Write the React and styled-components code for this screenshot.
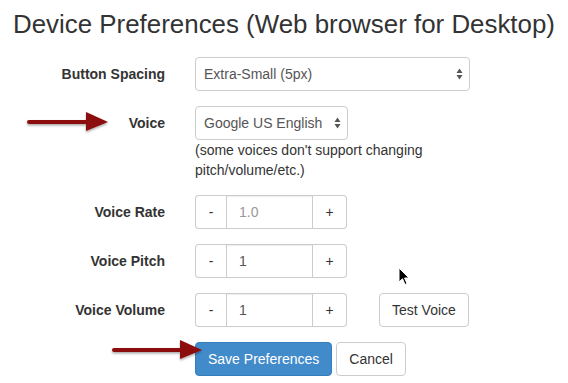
import React from "react";
import styled, { createGlobalStyle } from "styled-components";

const Global = createGlobalStyle`
  html, body { margin: 0; padding: 0; background: #fff; }
  body {
    font-family: "Liberation Sans", Arial, Helvetica, sans-serif;
    font-size: 14px;
    line-height: 20px;
    color: #333;
  }
  * { box-sizing: border-box; }
`;

const Page = styled.div`
  position: relative;
  width: 568px;
  height: 383px;
  padding: 10px 0 0 15px;
  overflow: hidden;
`;

const Title = styled.h1`
  margin: 0 0 18.4px -2px;
  font-size: 25.9px;
  font-weight: 400;
  line-height: 28.6px;
  color: #333;
  white-space: nowrap;
`;

const Form = styled.div`
  display: grid;
  grid-template-columns: 150px auto;
  column-gap: 30px;
  row-gap: 15px;
  align-items: start;
`;

const Label = styled.div`
  text-align: right;
  font-weight: 700;
  padding-top: 7px;
  line-height: 20px;
  color: #333;
`;

const Control = styled.div`
  display: flex;
  flex-direction: column;
  align-items: flex-start;
`;

const InlineRow = styled.div`
  display: flex;
  align-items: center;
  gap: ${(p) => p.$gap || 0}px;
`;

const SelectBox = styled.div`
  width: ${(p) => p.$w}px;
  height: 34px;
  border: 1px solid #ccc;
  border-radius: 4px;
  background: #fff;
  display: flex;
  align-items: center;
  justify-content: space-between;
  padding: 0 6px 0 8px;
  color: #555;
`;

const Help = styled.div`
  color: #333;
  line-height: 20px;
  width: 260px;
`;

const Group = styled.div`
  display: flex;
  height: 34px;
`;

const GroupBtn = styled.div`
  width: ${(p) => p.$w}px;
  height: 34px;
  border: 1px solid #ccc;
  background: #fff;
  display: flex;
  align-items: center;
  justify-content: center;
  color: #333;
  border-radius: ${(p) => (p.$side === "left" ? "4px 0 0 4px" : "0 4px 4px 0")};
  ${(p) => (p.$side === "left" ? "border-right: none;" : "border-left: none;")}
`;

const GroupInput = styled.div`
  width: 87px;
  height: 34px;
  border: 1px solid #ccc;
  padding: 0 12px;
  display: flex;
  align-items: center;
  color: ${(p) => (p.$placeholder ? "#999" : "#555")};
  box-shadow: inset 0 1px 1px rgba(0, 0, 0, 0.075);
`;

const Button = styled.div`
  height: 34px;
  padding: 0 12px;
  border: 1px solid ${(p) => (p.$primary ? "#357ebd" : "#ccc")};
  border-radius: 4px;
  background: ${(p) => (p.$primary ? "#428bca" : "#fff")};
  color: ${(p) => (p.$primary ? "#fff" : "#333")};
  display: flex;
  align-items: center;
  white-space: nowrap;
`;

const Overlay = styled.svg`
  position: absolute;
  left: ${(p) => p.$x}px;
  top: ${(p) => p.$y}px;
  overflow: visible;
`;

const Caret = () => (
  <svg width="7" height="12" viewBox="0 0 7 12">
    <path d="M3.5 0.5 L6.5 5 L0.5 5 Z" fill="#555" />
    <path d="M3.5 11.5 L6.5 7 L0.5 7 Z" fill="#555" />
  </svg>
);

const Arrow = ({ x, y, len }) => (
  <Overlay $x={x} $y={y} width={len} height="22" viewBox={`0 0 ${len} 22`}>
    <defs>
      <filter id={`sh${x}`} x="-10%" y="-30%" width="120%" height="180%">
        <feDropShadow dx="0" dy="1.5" stdDeviation="1.2" floodColor="#000" floodOpacity="0.35" />
      </filter>
    </defs>
    <g filter={`url(#sh${x})`}>
      <rect x="0" y="9" width={len - 20} height="4" rx="2" fill="#8c0b0b" />
      <path d={`M${len - 22} 1 L${len} 11 L${len - 22} 20 Z`} fill="#8c0b0b" />
    </g>
  </Overlay>
);

const Cursor = () => (
  <Overlay $x={398} $y={267} width="12" height="19" viewBox="0 0 12 19">
    <path
      d="M1 1 L1 15 L4.5 11.8 L7 17.5 L9 16.6 L6.6 11 L11 11 Z"
      fill="#000"
      stroke="#fff"
      strokeWidth="1"
      strokeLinejoin="round"
    />
  </Overlay>
);

export default function App() {
  return (
    <>
      <Global />
      <Page>
        <Title>Device Preferences (Web browser for Desktop)</Title>
        <Form>
          <Label>Button Spacing</Label>
          <Control>
            <SelectBox $w={275}>
              <span>Extra-Small (5px)</span>
              <Caret />
            </SelectBox>
          </Control>

          <Label>Voice</Label>
          <Control>
            <SelectBox $w={153}>
              <span>Google US English</span>
              <Caret />
            </SelectBox>
            <Help>(some voices don't support changing pitch/volume/etc.)</Help>
          </Control>

          <Label>Voice Rate</Label>
          <Control>
            <Group>
              <GroupBtn $side="left" $w={31}>-</GroupBtn>
              <GroupInput $placeholder>1.0</GroupInput>
              <GroupBtn $side="right" $w={34}>+</GroupBtn>
            </Group>
          </Control>

          <Label>Voice Pitch</Label>
          <Control>
            <Group>
              <GroupBtn $side="left" $w={31}>-</GroupBtn>
              <GroupInput>1</GroupInput>
              <GroupBtn $side="right" $w={34}>+</GroupBtn>
            </Group>
          </Control>

          <Label>Voice Volume</Label>
          <Control>
            <InlineRow $gap={32}>
              <Group>
                <GroupBtn $side="left" $w={31}>-</GroupBtn>
                <GroupInput>1</GroupInput>
                <GroupBtn $side="right" $w={34}>+</GroupBtn>
              </Group>
              <Button>Test Voice</Button>
            </InlineRow>
          </Control>

          <div />
          <Control>
            <InlineRow $gap={4}>
              <Button $primary>Save Preferences</Button>
              <Button>Cancel</Button>
            </InlineRow>
          </Control>
        </Form>
        <Arrow x={27} y={111} len={81} />
        <Arrow x={112} y={339} len={90} />
        <Cursor />
      </Page>
    </>
  );
}
